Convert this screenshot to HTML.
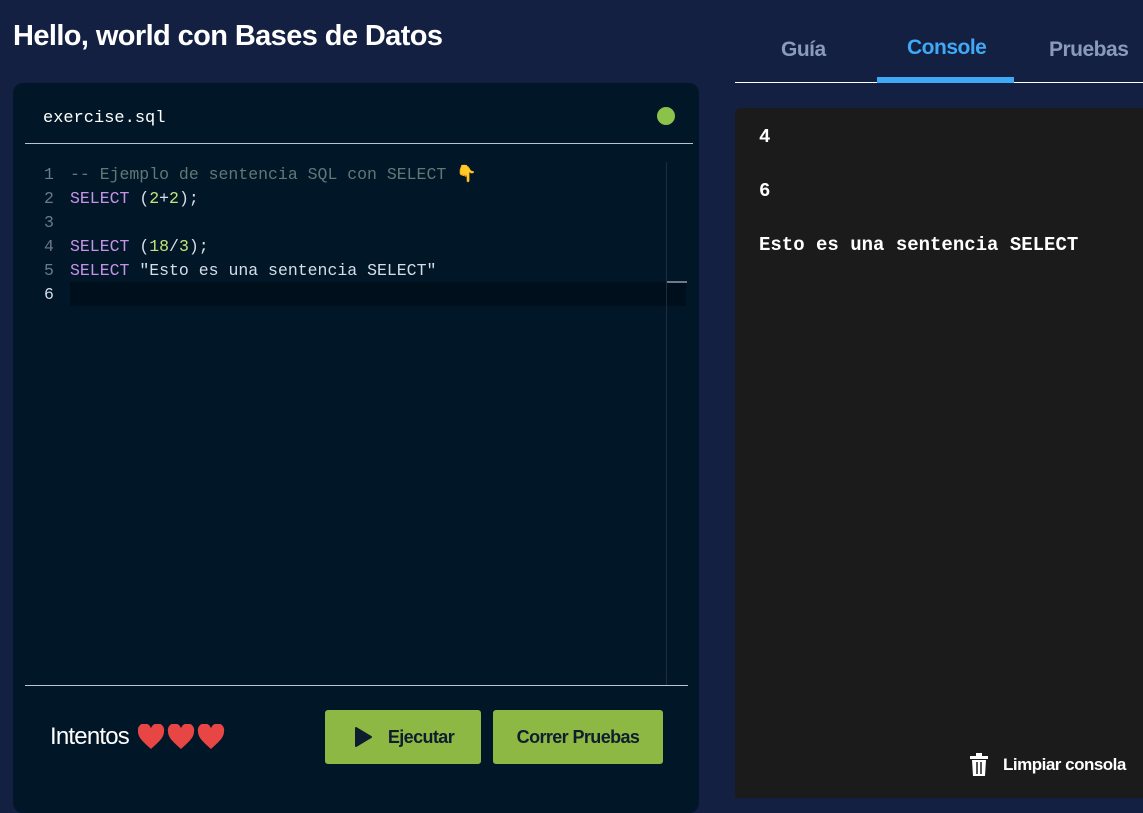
<!DOCTYPE html>
<html><head><meta charset="utf-8"><style>
*{margin:0;padding:0;box-sizing:border-box}
body{width:1143px;height:798px;overflow:hidden;background:#142041;font-family:"Liberation Sans",sans-serif;position:relative}
.title{position:absolute;left:13px;top:20px;color:#fff;font-weight:bold;font-size:29px;letter-spacing:-0.6px}
.ed{position:absolute;left:13px;top:83px;width:686px;height:730px;background:#011627;border-radius:10px}
.fname{position:absolute;left:30px;top:26px;color:#fff;font-family:"Liberation Mono",monospace;font-size:17px}
.dot{position:absolute;left:644px;top:24px;width:18px;height:18px;border-radius:50%;background:#8bc34a}
.hr1{position:absolute;left:12px;top:60px;width:668px;height:1px;background:#b8c4d0}
.code{position:absolute;left:0;top:80px;font-family:"Liberation Mono",monospace;font-size:16.5px;line-height:24px}
.ln{position:absolute;left:31px;width:12px;color:#6c7a88}
.tx{position:absolute;left:57px;white-space:pre}
.cur{position:absolute;left:57px;top:199px;width:616px;height:24px;background:#000f1c}
.sb{position:absolute;left:653px;top:79px;width:1px;height:523px;background:#1e2d3d}
.sbm{position:absolute;left:654px;top:198px;width:20px;height:2px;background:#6b7b8c}
.k{color:#c792ea}.c{color:#637777}.n{color:#c5e478}.w{color:#d6deeb}
.hr2{position:absolute;left:12px;top:602px;width:663px;height:1px;background:#b8c4d0}
.int{position:absolute;left:37px;top:640px;color:#fff;font-size:24px;letter-spacing:-0.8px;display:flex;align-items:center}
.btn{position:absolute;top:627px;height:54px;background:#8db843;border-radius:3px;color:#0f1e2e;font-weight:bold;font-size:18px;display:flex;align-items:center;justify-content:center;letter-spacing:-0.6px}
.tabs{position:absolute;top:0;left:735px;width:408px;height:83px}
.tab{position:absolute;top:36px;font-weight:bold;font-size:21px;color:#8a9bb9;letter-spacing:-0.5px}
.con{position:absolute;left:735px;top:108px;width:408px;height:690px;background:#1b1b1b;border-radius:6px 0 0 0}
.out{position:absolute;left:24px;font-family:"Liberation Mono",monospace;font-weight:bold;font-size:19px;color:#fff}
</style></head><body>
<div class="title">Hello, world con Bases de Datos</div>
<div class="ed">
<div class="fname">exercise.sql</div><div class="dot"></div><div class="hr1"></div>
<div class="cur"></div><div class="sb"></div><div class="sbm"></div>
<div class="code">
<div class="ln" style="top:0">1</div><div class="tx c" style="top:0">-- Ejemplo de sentencia SQL con SELECT <span style="color:#f5b942">👇</span></div>
<div class="ln" style="top:24px">2</div><div class="tx" style="top:24px"><span class="k">SELECT</span> <span class="w">(</span><span class="n">2</span><span class="w">+</span><span class="n">2</span><span class="w">);</span></div>
<div class="ln" style="top:48px">3</div>
<div class="ln" style="top:72px">4</div><div class="tx" style="top:72px"><span class="k">SELECT</span> <span class="w">(</span><span class="n">18</span><span class="w">/</span><span class="n">3</span><span class="w">);</span></div>
<div class="ln" style="top:96px">5</div><div class="tx" style="top:96px"><span class="k">SELECT</span> <span class="w">"Esto es una sentencia SELECT"</span></div>
<div class="ln" style="top:120px;color:#d6deeb">6</div>
</div>
<div class="hr2"></div>
<div class="int">Intentos<svg width="90" height="26" viewBox="0 0 90 26" style="margin-left:9px"><g fill="#e84545"><path id="h" d="M13 25C4 17 0 13 0 7.5A6.5 6.5 0 0 1 13 4.5A6.5 6.5 0 0 1 26 7.5C26 13 22 17 13 25Z"/><use href="#h" x="30"/><use href="#h" x="60"/></g></svg></div>
<div class="btn" style="left:312px;width:156px"><svg width="22" height="22" viewBox="0 0 22 22" style="margin-right:14px"><path d="M4 2L19 11L4 20Z" fill="#0f1e2e" stroke="#0f1e2e" stroke-width="2" stroke-linejoin="round"/></svg>Ejecutar</div>
<div class="btn" style="left:480px;width:170px">Correr Pruebas</div>
</div>
<div class="tabs">
<div style="position:absolute;left:0;top:82px;width:408px;height:1px;background:#fff"></div>
<div style="position:absolute;left:142px;top:77px;width:137px;height:6px;background:#3fa9f5"></div>
<div class="tab" style="left:46px;top:38px">Guía</div>
<div class="tab" style="left:172px;color:#3fa9f5">Console</div>
<div class="tab" style="left:314px;top:38px">Pruebas</div>
</div>
<div class="con">
<div class="out" style="top:18px">4</div>
<div class="out" style="top:72px">6</div>
<div class="out" style="top:126px">Esto es una sentencia SELECT</div>
<div style="position:absolute;left:234px;top:645px;color:#fff;font-weight:bold;font-size:17px;letter-spacing:-0.5px;display:flex;align-items:center"><svg width="20" height="24" viewBox="0 0 20 24" style="margin-right:14px"><rect x="1" y="3" width="18" height="3" fill="#fff"/><rect x="7" y="0" width="6" height="3" fill="#fff"/><path d="M3 7H17L16 23H4Z" fill="#fff"/><path d="M8 9V21M12 9V21" stroke="#1b1b1b" stroke-width="1.5"/></svg>Limpiar consola</div>
</div>
</body></html>
